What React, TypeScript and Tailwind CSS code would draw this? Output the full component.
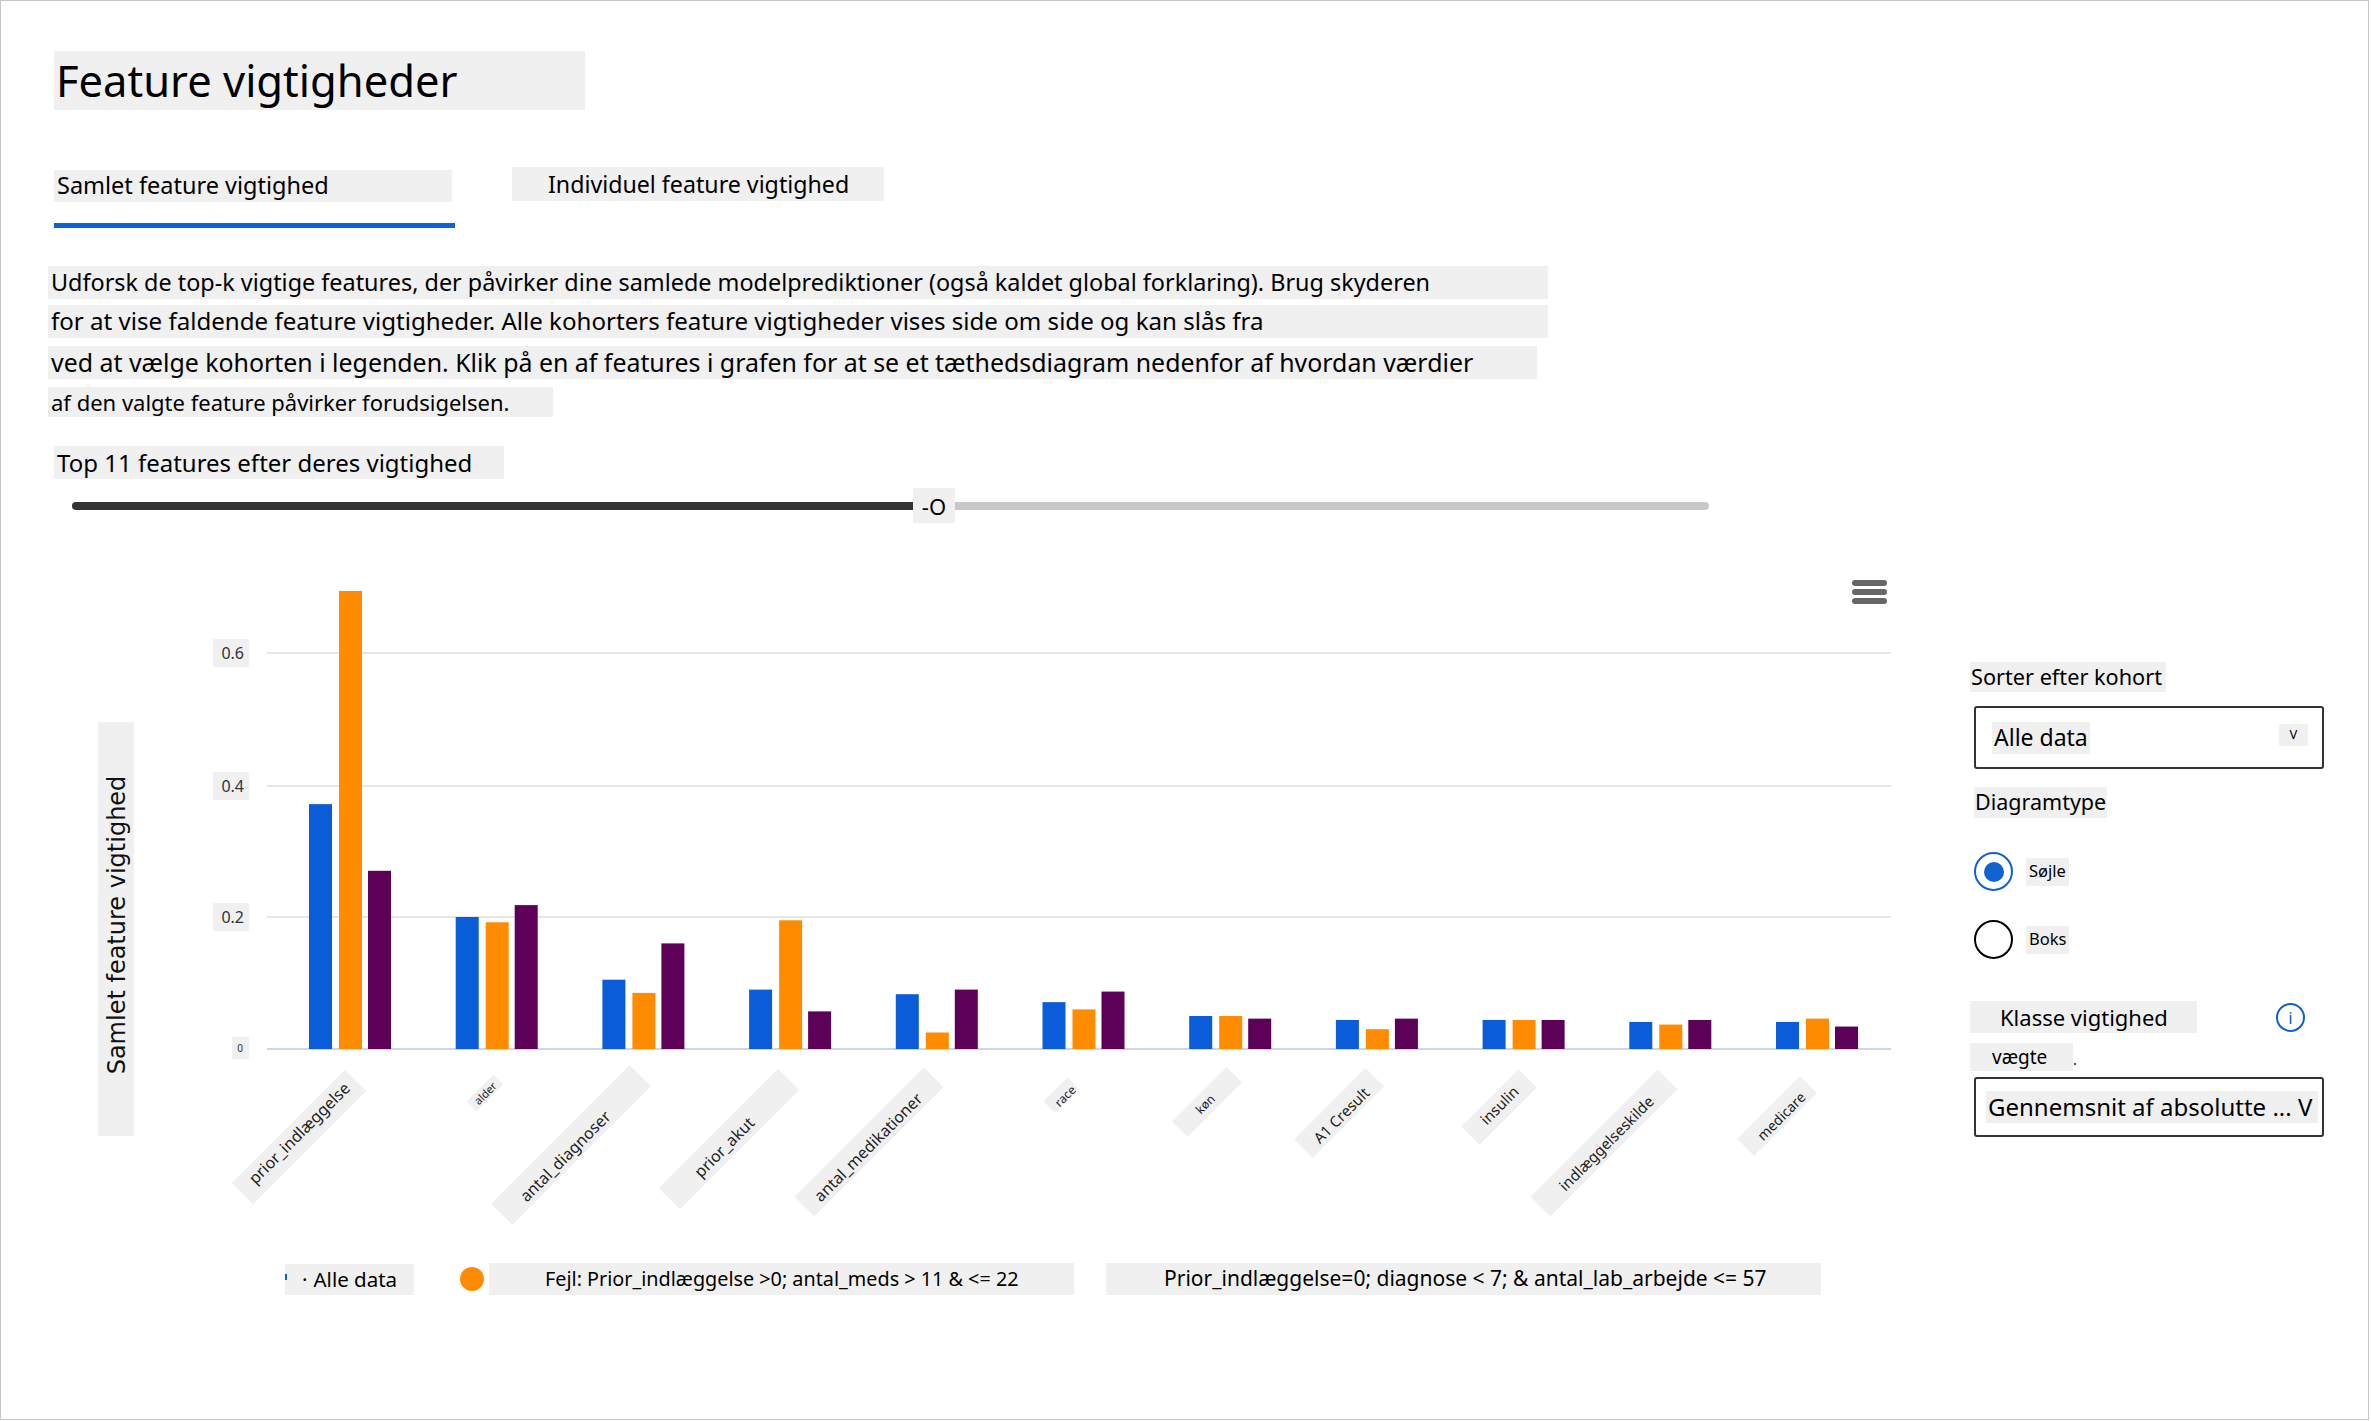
import React from 'react';

const FONT = { fontFamily: '"Noto Sans", "Open Sans", sans-serif' };

// [blue, orange, purple] per feature
const values: number[][] = [
  [0.371, 0.694, 0.27],
  [0.2, 0.192, 0.218],
  [0.105, 0.085, 0.16],
  [0.09, 0.195, 0.057],
  [0.083, 0.025, 0.09],
  [0.071, 0.06, 0.087],
  [0.05, 0.05, 0.046],
  [0.044, 0.03, 0.046],
  [0.044, 0.044, 0.044],
  [0.041, 0.037, 0.044],
  [0.041, 0.046, 0.034],
];

const colors = ['#0a5cd8', '#ff8c00', '#5c0058'];

// label text + text centre + font size, box centre + length + thickness
const labels = [
  { t: 'prior_indlæggelse', tx: 298, ty: 1132, fs: 16, bx: 298, by: 1136, bl: 160, bt: 30 },
  { t: 'alder', tx: 484, ty: 1092, fs: 11, bx: 484, by: 1092, bl: 38, bt: 14 },
  { t: 'antal_diagnoser', tx: 564, ty: 1155, fs: 16, bx: 570, by: 1144, bl: 196, bt: 30 },
  { t: 'prior_akut', tx: 723, ty: 1146, fs: 16, bx: 728, by: 1138, bl: 169, bt: 30 },
  { t: 'antal_medikationer', tx: 867, ty: 1146, fs: 16, bx: 868, by: 1141, bl: 183, bt: 28 },
  { t: 'race', tx: 1064, ty: 1095, fs: 12, bx: 1060, by: 1094, bl: 34, bt: 16 },
  { t: 'køn', tx: 1204, ty: 1103, fs: 12, bx: 1206, by: 1101, bl: 77, bt: 22 },
  { t: 'A1 Cresult', tx: 1340, ty: 1114, fs: 15, bx: 1338, by: 1112, bl: 101, bt: 26 },
  { t: 'insulin', tx: 1498, ty: 1104, fs: 15, bx: 1498, by: 1106, bl: 81, bt: 26 },
  { t: 'indlæggelseskilde', tx: 1605, ty: 1142, fs: 15, bx: 1603, by: 1142, bl: 180, bt: 28 },
  { t: 'medicare', tx: 1780, ty: 1115, fs: 14, bx: 1776, by: 1115, bl: 89, bt: 24 },
];

const BASE = 1048;
const PER = 660;

function Chart() {
  return (
    <svg width={1960} height={700} viewBox="0 560 1960 700" className="block shrink-0">
      {/* menu */}
      <rect x={1851} y={579} width={35} height={6} rx={3} fill="#666" />
      <rect x={1851} y={588} width={35} height={6} rx={3} fill="#666" />
      <rect x={1851} y={597} width={35} height={6} rx={3} fill="#666" />

      {/* grid */}
      {[652, 785, 916].map((y) => (
        <line key={y} x1={266} x2={1890} y1={y} y2={y} stroke="#e6e6e6" strokeWidth={2} />
      ))}
      <line x1={266} x2={1890} y1={BASE} y2={BASE} stroke="#ccd6eb" strokeWidth={2} />

      {/* y ticks */}
      {[
        ['0.6', 652],
        ['0.4', 785],
        ['0.2', 916],
      ].map(([t, y]) => (
        <g key={t as string}>
          <rect x={212} y={(y as number) - 14} width={36} height={28} fill="#f0f0f0" />
          <text x={243} y={y as number} textAnchor="end" dominantBaseline="central" fontSize={16} fill="#333" style={FONT}>
            {t}
          </text>
        </g>
      ))}
      <rect x={231} y={1036} width={17} height={22} fill="#f0f0f0" />
      <text x={242} y={1047} textAnchor="end" dominantBaseline="central" fontSize={10} fill="#333" style={FONT}>
        0
      </text>

      {/* y title */}
      <rect x={97} y={721} width={36} height={414} fill="#f0f0f0" />
      <text
        transform="translate(116 924) rotate(-90)"
        textAnchor="middle"
        dominantBaseline="central"
        fontSize={24}
        fill="#111"
        style={{ fontFamily: '"DejaVu Sans", Verdana, sans-serif' }}
      >
        Samlet feature vigtighed
      </text>

      {/* bars */}
      {values.map((g, i) => {
        const c = 349 + 146.7 * i;
        const offs = [-41, -11, 18];
        return g.map((v, j) => (
          <rect key={`${i}-${j}`} x={c + offs[j]} y={BASE - v * PER} width={23} height={v * PER} fill={colors[j]} />
        ));
      })}

      {/* x labels */}
      {labels.map((l) => (
        <g key={l.t}>
          <rect
            transform={`translate(${l.bx} ${l.by}) rotate(-45)`}
            x={-l.bl / 2}
            y={-l.bt / 2}
            width={l.bl}
            height={l.bt}
            fill="#f0f0f0"
          />
          <text
            transform={`translate(${l.tx} ${l.ty}) rotate(-45)`}
            textAnchor="middle"
            dominantBaseline="central"
            fontSize={l.fs}
            fill="#222"
            style={FONT}
          >
            {l.t}
          </text>
        </g>
      ))}
    </svg>
  );
}

function Radio({ checked, label }: { checked?: boolean; label: string }) {
  return (
    <div className="flex items-center ml-[4px]">
      <div
        className={`w-[39px] h-[39px] rounded-full flex items-center justify-center border-[2.5px] ${
          checked ? 'border-[#0f62d0]' : 'border-black'
        }`}
      >
        {checked && <div className="w-[20px] h-[20px] rounded-full bg-[#0f62d0]" />}
      </div>
      <span className="ml-[13px] bg-[#f0f0f0] px-[3px] h-[28px] flex items-center text-[16.5px] text-black">{label}</span>
    </div>
  );
}

export default function App() {
  return (
    <div className="w-[2369px] h-[1420px] border border-[#c6c6c6] bg-white text-black overflow-hidden" style={FONT}>
      {/* ── Header ── */}
      <div className="pl-[53px] pt-[50px]">
        <div className="w-[531px] h-[59px] bg-[#f0f0f0] flex items-center pl-[2px] text-[43.5px] leading-none">
          Feature vigtigheder
        </div>

        {/* tabs */}
        <div className="flex items-start mt-[57px]">
          <div className="w-[401px]">
            <div className="mt-[3px] w-[398px] h-[32px] bg-[#f0f0f0] flex items-center pl-[3px] text-[23.5px]">
              Samlet feature vigtighed
            </div>
            <div className="mt-[21px] h-[5px] w-[401px] bg-[#0f62d0]" />
          </div>
          <div className="ml-[57px] w-[372px] h-[34px] bg-[#f0f0f0] flex items-center pl-[36px] text-[23.2px]">
            Individuel feature vigtighed
          </div>
        </div>

        {/* description */}
        <div className="-ml-[6px] mt-[38px] flex flex-col">
          <div className="w-[1500px] h-[33px] bg-[#f0f0f0] flex items-center pl-[3px] text-[23.4px]">
            Udforsk de top-k vigtige features, der påvirker dine samlede modelprediktioner (også kaldet global forklaring). Brug skyderen
          </div>
          <div className="mt-[6px] w-[1500px] h-[33px] bg-[#f0f0f0] flex items-center pl-[3px] text-[24.1px]">
            for at vise faldende feature vigtigheder. Alle kohorters feature vigtigheder vises side om side og kan slås fra
          </div>
          <div className="mt-[8px] w-[1489px] h-[33px] bg-[#f0f0f0] flex items-center pl-[3px] text-[24.9px]">
            ved at vælge kohorten i legenden. Klik på en af features i grafen for at se et tæthedsdiagram nedenfor af hvordan værdier
          </div>
          <div className="mt-[8px] w-[505px] h-[30px] bg-[#f0f0f0] flex items-center pl-[3px] text-[22px]">
            af den valgte feature påvirker forudsigelsen.
          </div>
        </div>

        <div className="mt-[29px] w-[450px] h-[33px] bg-[#f0f0f0] flex items-center pl-[3px] text-[24px]">
          Top 11 features efter deres vigtighed
        </div>

        {/* slider */}
        <div className="mt-[9px] ml-[18px] flex items-center">
          <div className="w-[841px] h-[8px] bg-[#333] rounded-l-full" />
          <div className="w-[42px] h-[35px] bg-[#f0f0f0] flex items-center justify-center text-[22px] leading-none">-O</div>
          <div className="w-[754px] h-[8px] bg-[#c8c8c8] rounded-r-full" />
        </div>
      </div>

      {/* ── Chart + options ── */}
      <div className="flex mt-[38px]">
        <div className="flex flex-col">
          <Chart />
          {/* legend */}
          <div className="mt-[2px] pl-[284px] flex items-center">
            <div className="relative w-[129px] h-[31px] bg-[#f0f0f0] flex items-center pl-[17px] text-[20.5px]">
              <span className="absolute left-0 top-[10px] w-[2px] h-[6px] bg-[#0a5cd8]" />
              <span className="mr-[6px]">·</span>Alle data
            </div>
            <div className="ml-[46px] w-[24px] h-[24px] rounded-full bg-[#ff8c00]" />
            <div className="ml-[5px] w-[585px] h-[32px] bg-[#f0f0f0] flex items-center pl-[56px] text-[19.8px]">
              Fejl: Prior_indlæggelse &gt;0; antal_meds &gt; 11 &amp; &lt;= 22
            </div>
            <div className="ml-[32px] w-[715px] h-[32px] bg-[#f0f0f0] flex items-center pl-[58px] text-[21px]">
              Prior_indlæggelse=0; diagnose &lt; 7; &amp; antal_lab_arbejde &lt;= 57
            </div>
          </div>
        </div>

        {/* right panel */}
        <div className="ml-[9px] pt-[101px] w-[360px] flex flex-col">
          <div className="w-[196px] h-[30px] bg-[#f0f0f0] flex items-center pl-[1px] text-[21.7px]">Sorter efter kohort</div>

          <div className="mt-[14px] ml-[4px] w-[350px] h-[63px] border-2 border-[#333] rounded-[3px] flex items-center justify-between pl-[16px] pr-[14px]">
            <span className="bg-[#f0f0f0] h-[32px] flex items-center px-[2px] text-[23px]">Alle data</span>
            <span className="bg-[#f0f0f0] w-[29px] h-[22px] flex items-center justify-center text-[13px] -mt-[6px]">V</span>
          </div>

          <div className="mt-[18px] ml-[4px] w-[133px] h-[31px] bg-[#f0f0f0] flex items-center pl-[1px] text-[21.5px]">Diagramtype</div>

          <div className="mt-[34px]">
            <Radio checked label="Søjle" />
          </div>
          <div className="mt-[29px]">
            <Radio label="Boks" />
          </div>

          <div className="mt-[42px] flex items-center">
            <div className="w-[227px] h-[32px] bg-[#f0f0f0] flex items-center pl-[30px] text-[22px]">Klasse vigtighed</div>
            <div className="ml-[79px] w-[29px] h-[29px] rounded-full border-2 border-[#0f62d0] flex items-center justify-center text-[#0f62d0] text-[17px] leading-none">
              i
            </div>
          </div>

          <div className="mt-[10px] flex items-end">
            <div className="w-[103px] h-[28px] bg-[#f0f0f0] flex items-center pl-[22px] text-[19px]">vægte</div>
            <span className="mb-[6px] ml-[1px] w-[2px] h-[2px] bg-[#555]" />
          </div>

          <div className="mt-[6px] ml-[4px] w-[350px] h-[60px] border-2 border-[#333] rounded-[3px] flex items-center pl-[10px]">
            <span className="bg-[#f0f0f0] h-[32px] w-[332px] flex items-center pl-[2px] text-[24px] whitespace-nowrap">
              Gennemsnit af absolutte ... V
            </span>
          </div>
        </div>
      </div>
    </div>
  );
}
